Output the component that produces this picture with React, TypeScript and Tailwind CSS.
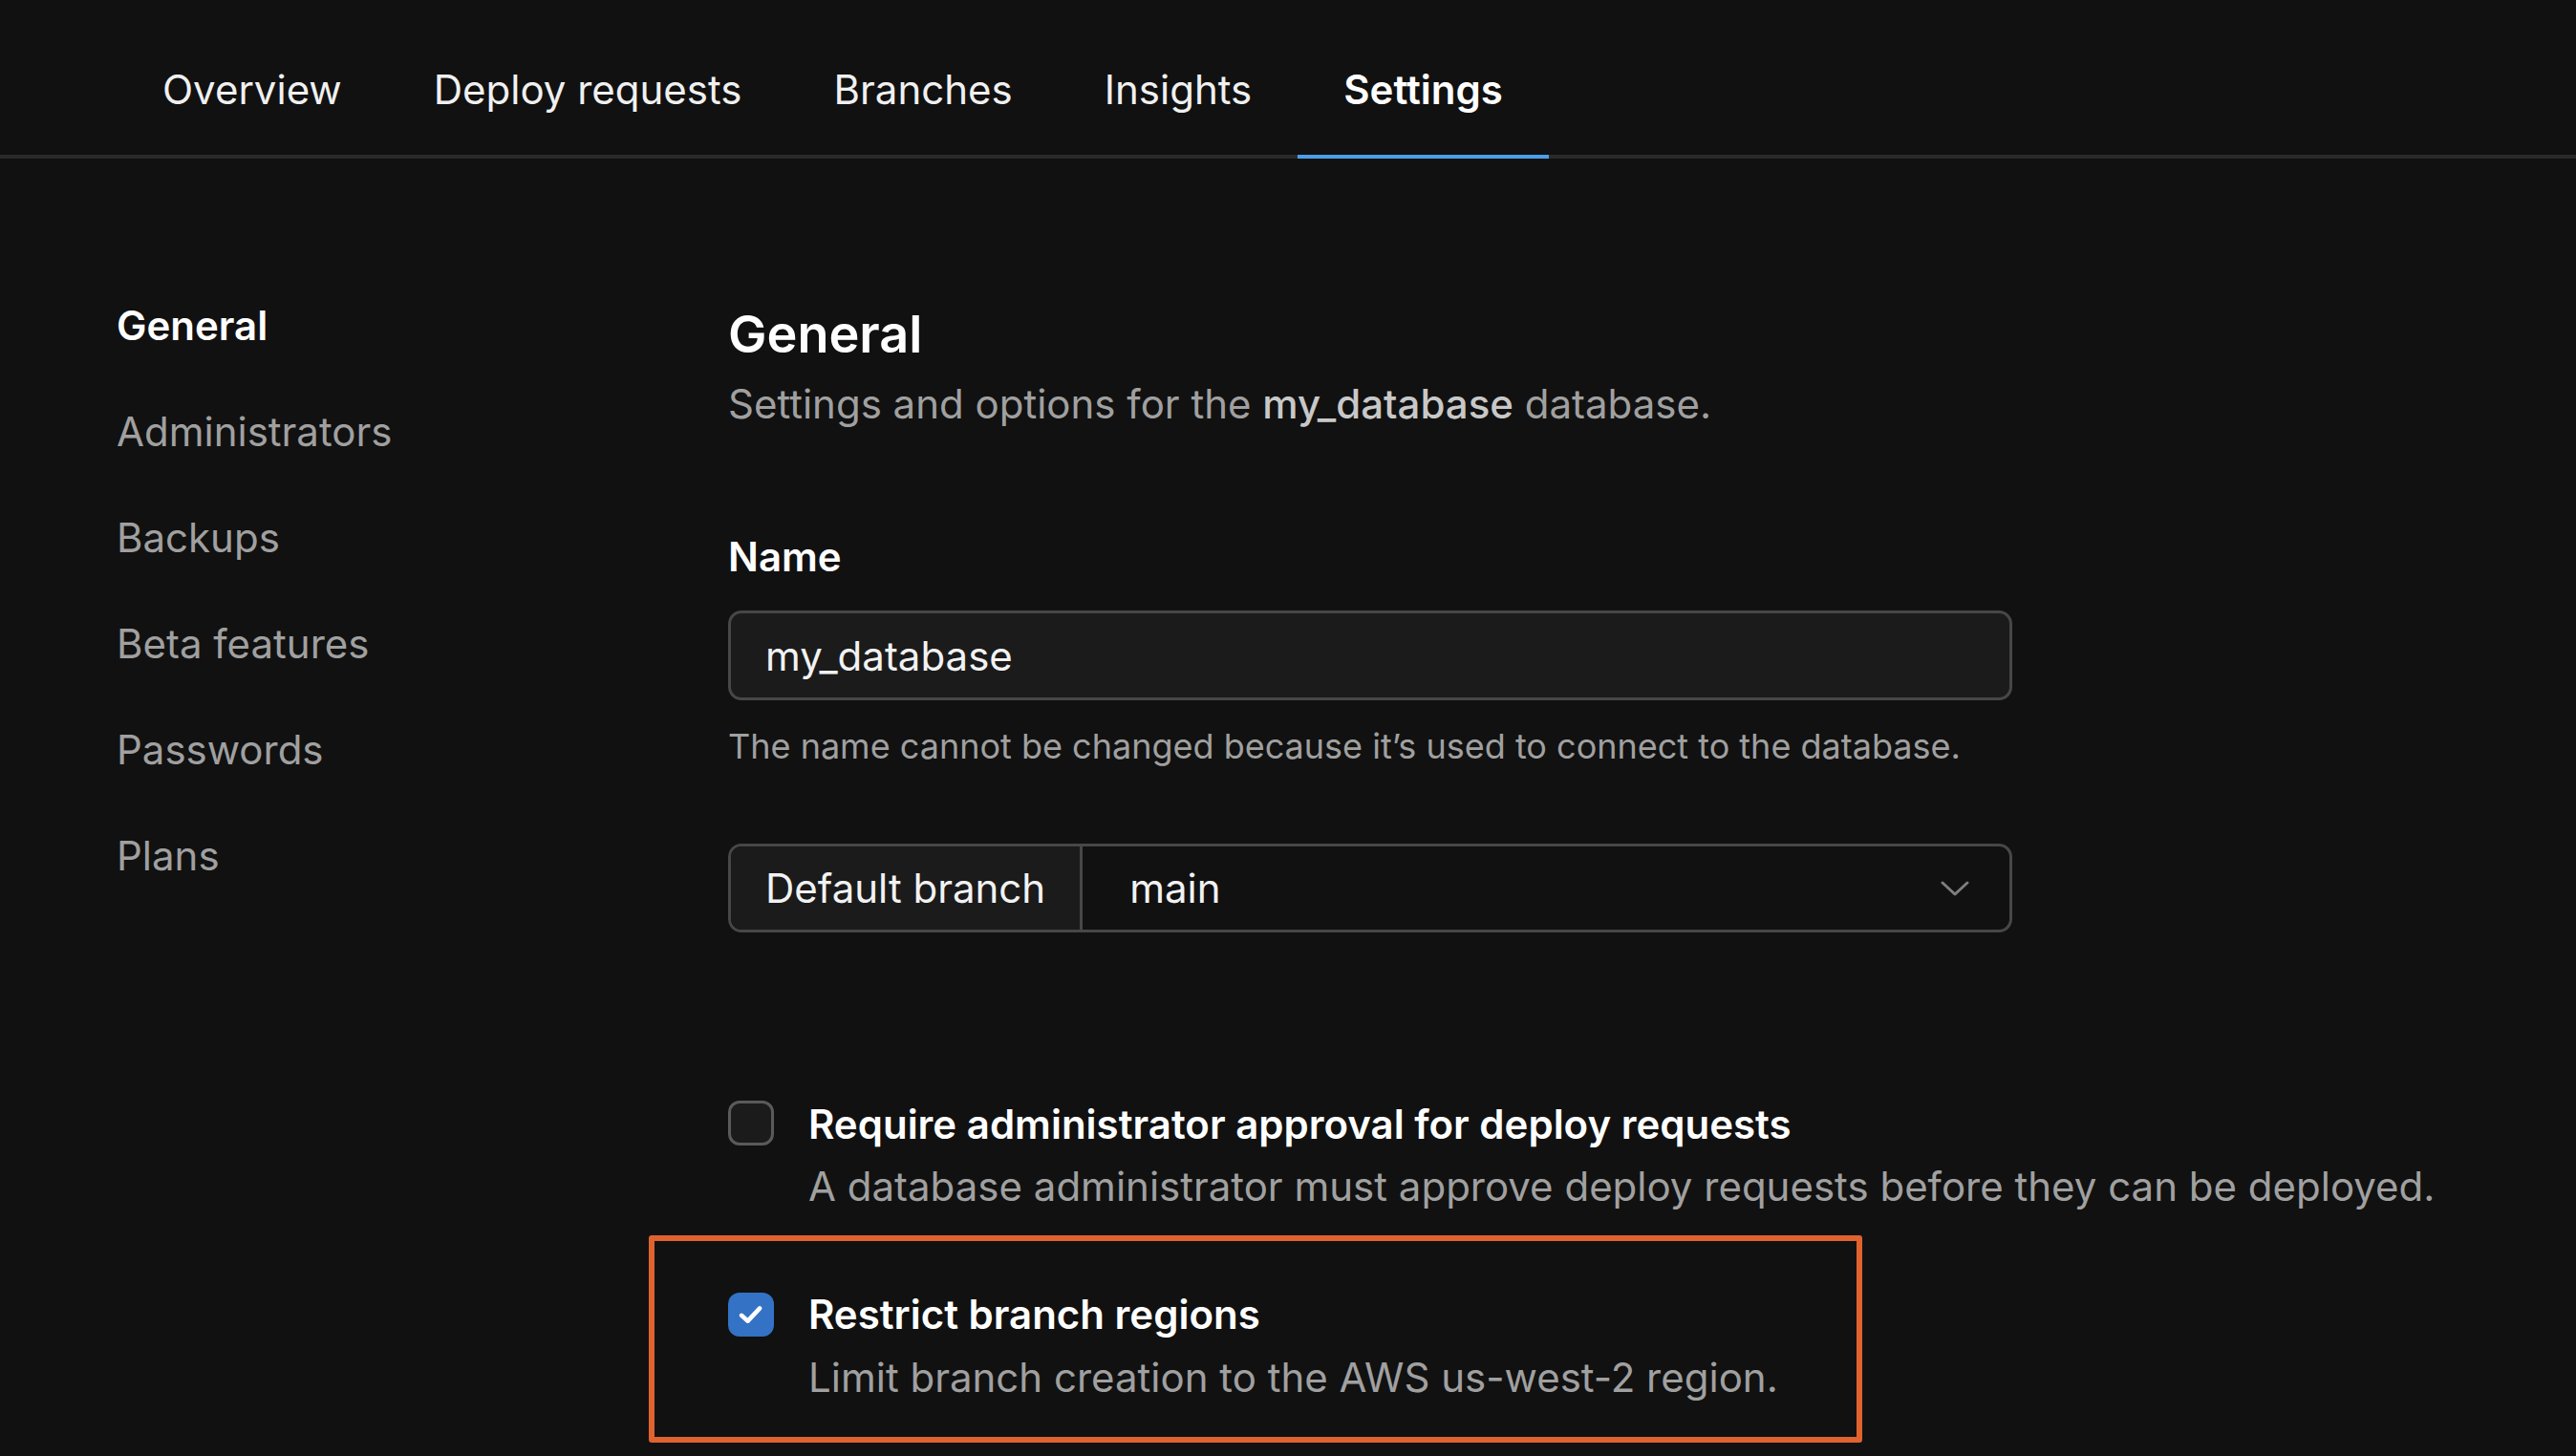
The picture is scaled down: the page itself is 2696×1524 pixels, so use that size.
import React from 'react';

const tabs = [
  { name: 'Overview', active: false },
  { name: 'Deploy requests', active: false },
  { name: 'Branches', active: false },
  { name: 'Insights', active: false },
  { name: 'Settings', active: true },
];

const sideItems = ['General', 'Administrators', 'Backups', 'Beta features', 'Passwords', 'Plans'];

const CheckIcon: React.FC = () => (
  <svg viewBox="0 0 48 48" className="w-[40px] h-[40px]" fill="none">
    <path d="M12 25 L20 32 L35 16" stroke="white" strokeWidth="5.5" strokeLinecap="round" strokeLinejoin="round" />
  </svg>
);

const Chevron: React.FC = () => (
  <svg viewBox="0 0 30 16" className="w-[30px] h-[16px]" fill="none">
    <path d="M2 2 L15 14 L28 2" stroke="#7e7e7e" strokeWidth="3" strokeLinecap="round" strokeLinejoin="round" />
  </svg>
);

const App: React.FC = () => {
  return (
    <div
      className="min-h-screen bg-[#111111] text-[#f2f2f2] overflow-hidden"
      style={{ fontFamily: 'Inter, "Noto Sans", sans-serif' }}
    >
      <nav className="flex pl-[122px] border-b-[4px] border-[#2a2a2a]">
        {tabs.map((tab) => (
          <a
            key={tab.name}
            href="#"
            className={
              tab.active
                ? 'px-[48px] pt-[62px] pb-[37px] -mb-[4px] border-b-[4px] border-[#4c9ee8] text-[42px] leading-[63px] font-semibold text-white'
                : 'px-[48px] pt-[62px] pb-[37px] -mb-[4px] border-b-[4px] border-transparent text-[42px] leading-[63px] font-normal text-[#f0f0f0]'
            }
          >
            {tab.name}
          </a>
        ))}
      </nav>

      <div className="flex pl-[122px]">
        <aside className="w-[640px] shrink-0 pt-[143px]">
          <ul className="flex flex-col gap-[48px]">
            {sideItems.map((item, i) => (
              <li
                key={item}
                className={
                  i === 0
                    ? 'text-[42px] leading-[63px] font-semibold text-white'
                    : 'text-[42px] leading-[63px] text-[#a0a0a0]'
                }
              >
                {item}
              </li>
            ))}
          </ul>
        </aside>

        <main className="flex-1 pt-[150px]">
          <h1 className="text-[54px] leading-[68px] font-semibold text-white">General</h1>
          <p className="mt-[7px] text-[42px] leading-[63px] text-[#a0a0a0]">
            Settings and options for the <span className="font-medium text-[#c8c8c8]">my_database</span> database.
          </p>

          <label className="block mt-[97px] text-[42px] leading-[63px] font-semibold text-white">Name</label>
          <div className="mt-[25px] w-[1344px] h-[94px] flex items-center px-[36px] rounded-[14px] border-[3px] border-[#474747] bg-[#1b1b1b] text-[42px] text-[#f2f2f2]">
            my_database
          </div>
          <p className="mt-[21px] text-[36px] leading-[54px] text-[#a0a0a0]">
            The name cannot be changed because it’s used to connect to the database.
          </p>

          <div className="mt-[75px] w-[1344px] h-[93px] flex rounded-[14px] border-[3px] border-[#474747] overflow-hidden">
            <div className="flex items-center px-[36px] bg-[#1b1b1b] border-r-[3px] border-[#474747] text-[42px] text-[#f2f2f2]">
              Default branch
            </div>
            <div className="flex-1 flex items-center justify-between pl-[49px] pr-[42px] text-[42px] text-[#f2f2f2]">
              <span>main</span>
              <Chevron />
            </div>
          </div>

          <div className="mt-[169px] flex gap-[36px]">
            <div className="mt-[7px] w-[48px] h-[47px] shrink-0 rounded-[12px] border-[3px] border-[#5a5a5a] bg-[#1b1b1b]" />
            <div>
              <div className="text-[42px] leading-[63px] font-semibold text-white">
                Require administrator approval for deploy requests
              </div>
              <div className="mt-[2px] text-[42px] leading-[63px] text-[#a0a0a0]">
                A database administrator must approve deploy requests before they can be deployed.
              </div>
            </div>
          </div>

          <div className="relative mt-[71px] flex gap-[36px]">
            <div className="absolute -left-[83px] -top-[51px] w-[1270px] h-[217px] border-[6px] border-[#e0622f] rounded-[3px] pointer-events-none" />
            <div className="mt-[9px] w-[48px] h-[46px] shrink-0 rounded-[12px] bg-[#3372c4] flex items-center justify-center">
              <CheckIcon />
            </div>
            <div>
              <div className="text-[42px] leading-[63px] font-semibold text-white">Restrict branch regions</div>
              <div className="mt-[3px] text-[42px] leading-[63px] text-[#a0a0a0]">
                Limit branch creation to the AWS us-west-2 region.
              </div>
            </div>
          </div>
        </main>
      </div>
    </div>
  );
};

export default App;
